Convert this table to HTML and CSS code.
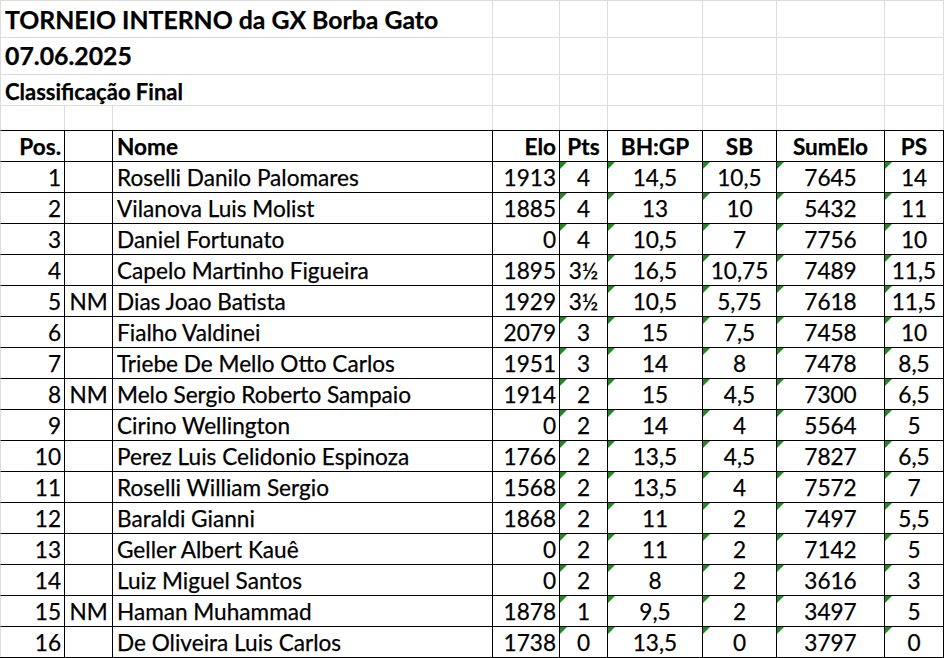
FILE: index.html
```html
<!DOCTYPE html>
<html lang="pt">
<head>
<meta charset="utf-8">
<title>TORNEIO INTERNO da GX Borba Gato</title>
<link rel="stylesheet" href="styles.css">
</head>
<body>
<div class="sheet">
  <div class="c g span3 title">TORNEIO INTERNO da GX Borba Gato</div>
  <div class="c g"></div><div class="c g"></div><div class="c g"></div><div class="c g"></div><div class="c g"></div><div class="c g last"></div>

  <div class="c g span3 date">07.06.2025</div>
  <div class="c g"></div><div class="c g"></div><div class="c g"></div><div class="c g"></div><div class="c g"></div><div class="c g last"></div>

  <div class="c g span3 sub">Classificação Final</div>
  <div class="c g"></div><div class="c g"></div><div class="c g"></div><div class="c g"></div><div class="c g"></div><div class="c g last"></div>

  <div class="c g"></div><div class="c g"></div><div class="c g"></div><div class="c g"></div><div class="c g"></div><div class="c g"></div><div class="c g"></div><div class="c g"></div><div class="c g last"></div>

  <div class="c k first r h">Pos.</div><div class="c k"></div><div class="c k l h">Nome</div><div class="c k r h">Elo</div><div class="c k m h">Pts</div><div class="c k m h">BH:GP</div><div class="c k m h">SB</div><div class="c k m h">SumElo</div><div class="c k m h last">PS</div>

  <div class="c k first r">1</div><div class="c k m"></div><div class="c k l">Roselli Danilo Palomares</div><div class="c k r">1913</div><div class="c k m t">4</div><div class="c k m t">14,5</div><div class="c k m t">10,5</div><div class="c k m t">7645</div><div class="c k m t last">14</div>
  <div class="c k first r">2</div><div class="c k m"></div><div class="c k l">Vilanova Luis Molist</div><div class="c k r">1885</div><div class="c k m t">4</div><div class="c k m t">13</div><div class="c k m t">10</div><div class="c k m t">5432</div><div class="c k m t last">11</div>
  <div class="c k first r">3</div><div class="c k m"></div><div class="c k l">Daniel Fortunato</div><div class="c k r">0</div><div class="c k m t">4</div><div class="c k m t">10,5</div><div class="c k m t">7</div><div class="c k m t">7756</div><div class="c k m t last">10</div>
  <div class="c k first r">4</div><div class="c k m"></div><div class="c k l">Capelo Martinho Figueira</div><div class="c k r">1895</div><div class="c k m">3½</div><div class="c k m t">16,5</div><div class="c k m t">10,75</div><div class="c k m t">7489</div><div class="c k m t last">11,5</div>
  <div class="c k first r">5</div><div class="c k m">NM</div><div class="c k l">Dias Joao Batista</div><div class="c k r">1929</div><div class="c k m">3½</div><div class="c k m t">10,5</div><div class="c k m t">5,75</div><div class="c k m t">7618</div><div class="c k m t last">11,5</div>
  <div class="c k first r">6</div><div class="c k m"></div><div class="c k l">Fialho Valdinei</div><div class="c k r">2079</div><div class="c k m t">3</div><div class="c k m t">15</div><div class="c k m t">7,5</div><div class="c k m t">7458</div><div class="c k m t last">10</div>
  <div class="c k first r">7</div><div class="c k m"></div><div class="c k l">Triebe De Mello Otto Carlos</div><div class="c k r">1951</div><div class="c k m t">3</div><div class="c k m t">14</div><div class="c k m t">8</div><div class="c k m t">7478</div><div class="c k m t last">8,5</div>
  <div class="c k first r">8</div><div class="c k m">NM</div><div class="c k l">Melo Sergio Roberto Sampaio</div><div class="c k r">1914</div><div class="c k m t">2</div><div class="c k m t">15</div><div class="c k m t">4,5</div><div class="c k m t">7300</div><div class="c k m t last">6,5</div>
  <div class="c k first r">9</div><div class="c k m"></div><div class="c k l">Cirino Wellington</div><div class="c k r">0</div><div class="c k m t">2</div><div class="c k m t">14</div><div class="c k m t">4</div><div class="c k m t">5564</div><div class="c k m t last">5</div>
  <div class="c k first r">10</div><div class="c k m"></div><div class="c k l">Perez Luis Celidonio Espinoza</div><div class="c k r">1766</div><div class="c k m t">2</div><div class="c k m t">13,5</div><div class="c k m t">4,5</div><div class="c k m t">7827</div><div class="c k m t last">6,5</div>
  <div class="c k first r">11</div><div class="c k m"></div><div class="c k l">Roselli William Sergio</div><div class="c k r">1568</div><div class="c k m t">2</div><div class="c k m t">13,5</div><div class="c k m t">4</div><div class="c k m t">7572</div><div class="c k m t last">7</div>
  <div class="c k first r">12</div><div class="c k m"></div><div class="c k l">Baraldi Gianni</div><div class="c k r">1868</div><div class="c k m t">2</div><div class="c k m t">11</div><div class="c k m t">2</div><div class="c k m t">7497</div><div class="c k m t last">5,5</div>
  <div class="c k first r">13</div><div class="c k m"></div><div class="c k l">Geller Albert Kauê</div><div class="c k r">0</div><div class="c k m t">2</div><div class="c k m t">11</div><div class="c k m t">2</div><div class="c k m t">7142</div><div class="c k m t last">5</div>
  <div class="c k first r">14</div><div class="c k m"></div><div class="c k l">Luiz Miguel Santos</div><div class="c k r">0</div><div class="c k m t">2</div><div class="c k m t">8</div><div class="c k m t">2</div><div class="c k m t">3616</div><div class="c k m t last">3</div>
  <div class="c k first r">15</div><div class="c k m">NM</div><div class="c k l">Haman Muhammad</div><div class="c k r">1878</div><div class="c k m t">1</div><div class="c k m t">9,5</div><div class="c k m t">2</div><div class="c k m t">3497</div><div class="c k m t last">5</div>
  <div class="c k first r">16</div><div class="c k m"></div><div class="c k l">De Oliveira Luis Carlos</div><div class="c k r">1738</div><div class="c k m t">0</div><div class="c k m t">13,5</div><div class="c k m t">0</div><div class="c k m t">3797</div><div class="c k m t last">0</div>
</div>
</body>
</html>
```

FILE: styles.css
```css
html, body {
  margin: 0;
  padding: 0;
  background: #ffffff;
}

.sheet {
  display: grid;
  grid-template-columns: 64px 48px 380px 67px 48px 95px 74px 108px 60px;
  grid-template-rows: 37px 37px 31px 25px repeat(17, 31px);
  width: 944px;
  border-bottom: 1px solid #000;
  font-family: "Lato", "Liberation Sans", sans-serif;
  font-size: 22.6px;
  color: #000;
}

.c {
  box-sizing: border-box;
  position: relative;
  display: flex;
  align-items: flex-end;
  line-height: 1;
  white-space: nowrap;
  padding: 0 4px 2px 4px;
  -webkit-text-stroke: 0.25px #000;
}

.g {
  border-top: 1px solid #dcdcdc;
  border-left: 1px solid #dcdcdc;
}

.g.last {
  border-right: 1px solid #dcdcdc;
}

.k {
  border-top: 1px solid #000;
  border-left: 1px solid #000;
}

.k.first {
  border-left-color: #dcdcdc;
}

.k.last {
  border-right: 1px solid #000;
}

.span3 {
  grid-column: span 3;
  font-weight: 700;
}

.title {
  font-size: 24.8px;
  padding-bottom: 4px;
}

.date {
  font-size: 24.8px;
  padding-bottom: 5px;
}

.sub {
  font-size: 22px;
  padding-bottom: 2px;
}

.h {
  font-weight: 700;
}

.r {
  justify-content: flex-end;
  padding-right: 3px;
}

.l {
  justify-content: flex-start;
}

.m {
  justify-content: center;
}

.t::before {
  content: "";
  position: absolute;
  top: 0;
  left: 0;
  width: 0;
  height: 0;
  border-top: 7px solid #1f8a1f;
  border-right: 7px solid transparent;
}
```
